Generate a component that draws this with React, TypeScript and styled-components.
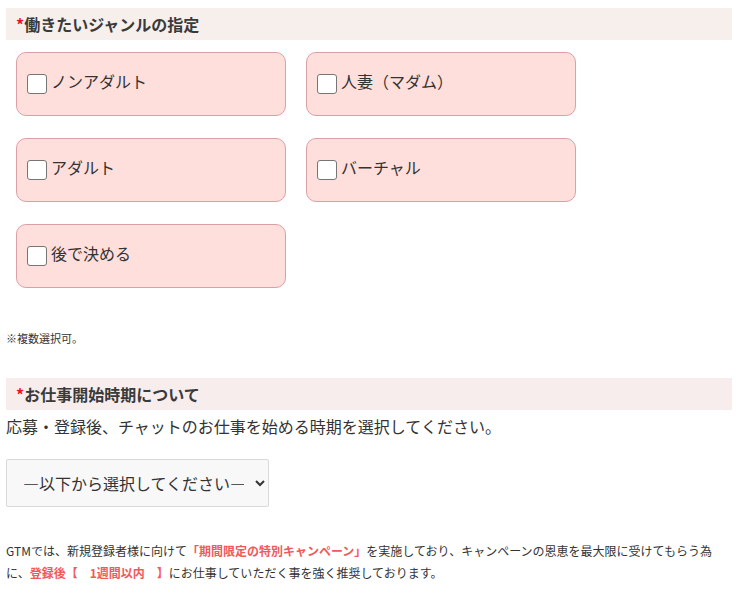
import styled, { createGlobalStyle } from "styled-components";

const GlobalStyle = createGlobalStyle`
  body {
    margin: 0;
    background: #fff;
    font-family: "Noto Sans CJK JP", "Noto Sans", sans-serif;
    color: #333;
  }
`;

const genres = ["ノンアダルト", "人妻（マダム）", "アダルト", "バーチャル", "後で決める"];

export default function App() {
  return (
    <>
      <GlobalStyle />
      <Page>
        <Heading>
          <Req>*</Req>働きたいジャンルの指定
        </Heading>
        <CardGrid>
          {genres.map((g) => (
            <Card key={g}>
              <Check type="checkbox" />
              <CardText>{g}</CardText>
            </Card>
          ))}
        </CardGrid>
        <Note>※複数選択可。</Note>

        <Heading $tone="pink">
          <Req>*</Req>お仕事開始時期について
        </Heading>
        <Lead>応募・登録後、チャットのお仕事を始める時期を選択してください。</Lead>
        <Select defaultValue="">
          <option value="">―以下から選択してください―</option>
        </Select>
        <Info>
          GTMでは、新規登録者様に向けて<Em>「期間限定の特別キャンペーン」</Em>
          を実施しており、キャンペーンの恩恵を最大限に受けてもらう為に、
          <Em>登録後【　1週間以内　】</Em>にお仕事していただく事を強く推奨しております。
        </Info>
      </Page>
    </>
  );
}

const Page = styled.div`
  padding: 8px 8px 0 6px;
`;

const Heading = styled.div<{ $tone?: string }>`
  height: 32px;
  line-height: 32px;
  padding-left: 10px;
  font-size: 16px;
  font-weight: bold;
  color: #3a3a3a;
  background: ${(p) => (p.$tone === "pink" ? "#f8eded" : "#f6efec")};
`;

const Req = styled.span`
  color: #e8141e;
`;

const CardGrid = styled.div`
  display: grid;
  grid-template-columns: 270px 270px;
  column-gap: 20px;
  row-gap: 22px;
  margin: 12px 0 0 10px;
`;

const Card = styled.label`
  display: flex;
  align-items: center;
  height: 64px;
  box-sizing: border-box;
  padding-left: 10px;
  border: 1px solid #dba0a6;
  border-radius: 10px;
  background: #ffdfdb;
  font-size: 16px;
  color: #333;
`;

const CardText = styled.span`
  line-height: 24px;
  padding-bottom: 6px;
`;

const Check = styled.input`
  appearance: none;
  width: 20px;
  height: 20px;
  margin: 0 4px 0 0;
  box-sizing: border-box;
  border: 1px solid #767676;
  border-radius: 3px;
  background: #fff;
`;

const Note = styled.div`
  margin: 42px 0 32px;
  font-size: 11px;
  line-height: 16px;
  color: #333;
`;

const Lead = styled.div`
  margin-top: 4px;
  font-size: 16px;
  line-height: 24px;
  color: #333;
`;

const Select = styled.select`
  display: block;
  margin-top: 21px;
  width: 263px;
  height: 48px;
  padding: 0 8px 0 12px;
  border: 1px solid #d9d9d9;
  border-radius: 2px;
  background: #f8f8f8;
  font-family: inherit;
  font-size: 16px;
  color: #333;
`;

const Info = styled.p`
  margin: 33px 0 0;
  font-size: 12px;
  line-height: 22px;
  color: #333;
`;

const Em = styled.span`
  color: #f05a5a;
  font-weight: bold;
`;
